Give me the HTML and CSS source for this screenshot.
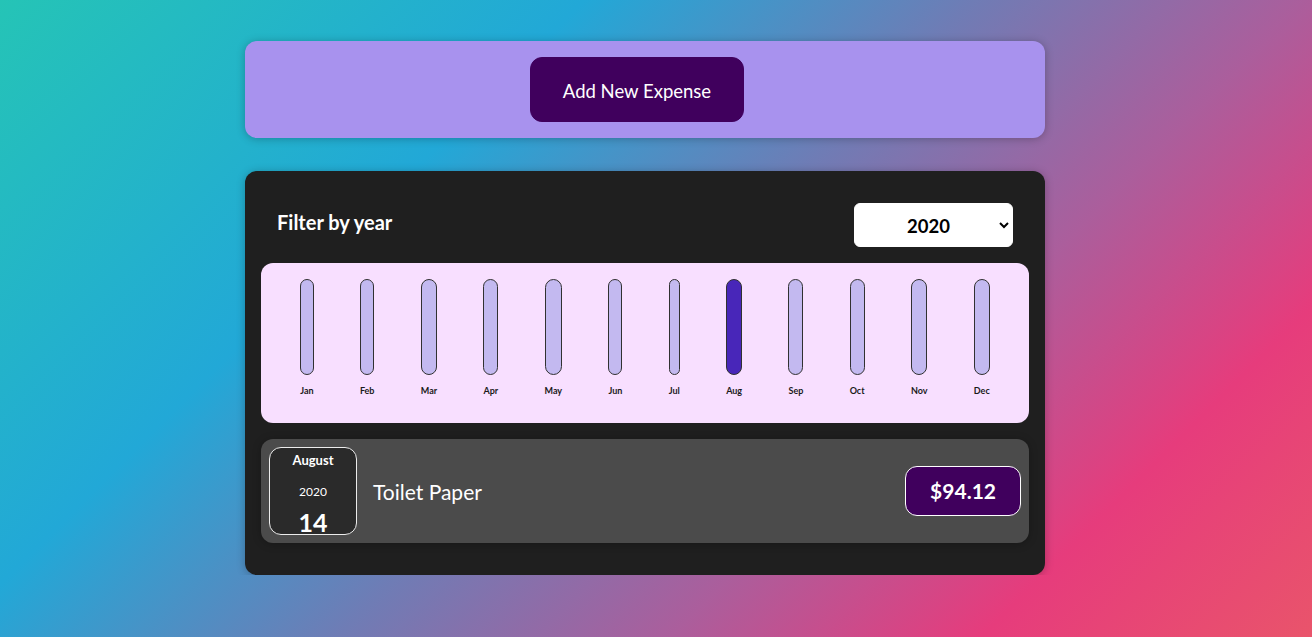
FILE: index.html
```html
<!DOCTYPE html>
<html lang="en">
<head>
<meta charset="utf-8">
<title>Expenses</title>
<link rel="stylesheet" href="styles.css">
</head>
<body>
<div class="new-expense card">
  <button class="add-btn" type="button">Add New Expense</button>
</div>
<div class="expenses card">
  <div class="filter">
    <label class="filter-label" for="year">Filter by year</label>
    <select id="year" class="filter-select">
      <option>2022</option>
      <option>2021</option>
      <option selected>2020</option>
      <option>2019</option>
    </select>
  </div>
  <div class="chart">
    <div class="bar"><div class="bar-inner"></div><div class="bar-label">Jan</div></div>
    <div class="bar"><div class="bar-inner"></div><div class="bar-label">Feb</div></div>
    <div class="bar"><div class="bar-inner"></div><div class="bar-label">Mar</div></div>
    <div class="bar"><div class="bar-inner"></div><div class="bar-label">Apr</div></div>
    <div class="bar"><div class="bar-inner"></div><div class="bar-label">May</div></div>
    <div class="bar"><div class="bar-inner"></div><div class="bar-label">Jun</div></div>
    <div class="bar"><div class="bar-inner"></div><div class="bar-label">Jul</div></div>
    <div class="bar"><div class="bar-inner bar-full"></div><div class="bar-label">Aug</div></div>
    <div class="bar"><div class="bar-inner"></div><div class="bar-label">Sep</div></div>
    <div class="bar"><div class="bar-inner"></div><div class="bar-label">Oct</div></div>
    <div class="bar"><div class="bar-inner"></div><div class="bar-label">Nov</div></div>
    <div class="bar"><div class="bar-inner"></div><div class="bar-label">Dec</div></div>
  </div>
  <div class="expense-item">
    <div class="date">
      <div class="date-month">August</div>
      <div class="date-year">2020</div>
      <div class="date-day">14</div>
    </div>
    <div class="description">
      <h2 class="title">Toilet Paper</h2>
      <div class="price">$94.12</div>
    </div>
  </div>
</div>
</body>
</html>
```

FILE: styles.css
```css
* { box-sizing: border-box; }

html, body { min-height: 100%; }

body {
  margin: 0;
  padding: 1px 22px 0 0;
  font-family: Lato, "Liberation Sans", sans-serif;
  background: linear-gradient(135deg, #25c4b6 0%, #22a8d7 30%, #6f7cb5 50%, #ab5e9c 67%, #e63c7c 83%, #e9546b 100%);
  background-attachment: fixed;
}

.card {
  border-radius: 12px;
  box-shadow: 0 1px 8px rgba(0, 0, 0, 0.25);
}

.new-expense {
  width: 800px;
  margin: 40px auto 33px;
  padding: 16px;
  background-color: #a892ee;
  text-align: center;
}

.add-btn {
  font-family: inherit;
  font-size: 18.5px;
  line-height: 31px;
  padding: 18px 32px 14px;
  margin-right: 16px;
  border: 1px solid #40005d;
  background-color: #40005d;
  color: #fff;
  border-radius: 12px;
  cursor: pointer;
}

.expenses {
  width: 800px;
  margin: 0 auto;
  padding: 16px;
  background-color: #1f1f1f;
}

.filter {
  display: flex;
  align-items: center;
  justify-content: space-between;
  margin: 16px 0;
  padding: 0 16px;
  color: #fff;
}

.filter-label {
  font-weight: bold;
  font-size: 20px;
  line-height: 24px;
  margin-top: -6px;
}

.filter-select {
  font-family: inherit;
  font-size: 18.5px;
  font-weight: bold;
  height: 44px;
  width: 159px;
  padding: 2px 0 0 48px;
  border: 1px solid #fff;
  border-radius: 6px;
  background: #fff;
  color: #000;
}

.chart {
  height: 160px;
  padding: 16px;
  border-radius: 12px;
  background-color: #f8dfff;
  display: flex;
  justify-content: space-around;
}

.bar {
  display: flex;
  flex-direction: column;
  align-items: stretch;
}

.bar-inner {
  height: 96px;
  border: 1px solid #313131;
  border-radius: 12px;
  background-color: #c3b9f0;
}

.bar-full {
  background-color: #4826b9;
}

.bar-label {
  margin-top: 10px;
  font-size: 9px;
  line-height: 12px;
  font-weight: bold;
  color: #1a1a1a;
  text-align: center;
}

.expense-item {
  display: flex;
  align-items: center;
  margin: 16px 0;
  padding: 8px;
  border-radius: 12px;
  background-color: #4b4b4b;
  box-shadow: 0 1px 8px rgba(0, 0, 0, 0.25);
}

.date {
  display: flex;
  flex-direction: column;
  align-items: center;
  justify-content: space-between;
  width: 88px;
  height: 88px;
  padding: 3px 0 0;
  border: 1px solid #ececec;
  border-radius: 12px;
  background-color: #2a2a2a;
  color: #fff;
}

.date-month {
  font-size: 13px;
  line-height: 18px;
  font-weight: bold;
}

.date-year {
  font-size: 12px;
  line-height: 18px;
  margin-top: 3px;
}

.date-day {
  font-size: 25px;
  line-height: 23px;
  font-weight: bold;
}

.description {
  flex: 1;
  display: flex;
  align-items: center;
}

.title {
  flex: 1;
  margin: 0 16px;
  font-size: 21px;
  font-weight: normal;
  color: #fff;
}

.price {
  font-size: 21px;
  line-height: 32px;
  font-weight: bold;
  color: #fff;
  background-color: #40005d;
  border: 1px solid #fff;
  padding: 8px 24px;
  border-radius: 12px;
}
```
